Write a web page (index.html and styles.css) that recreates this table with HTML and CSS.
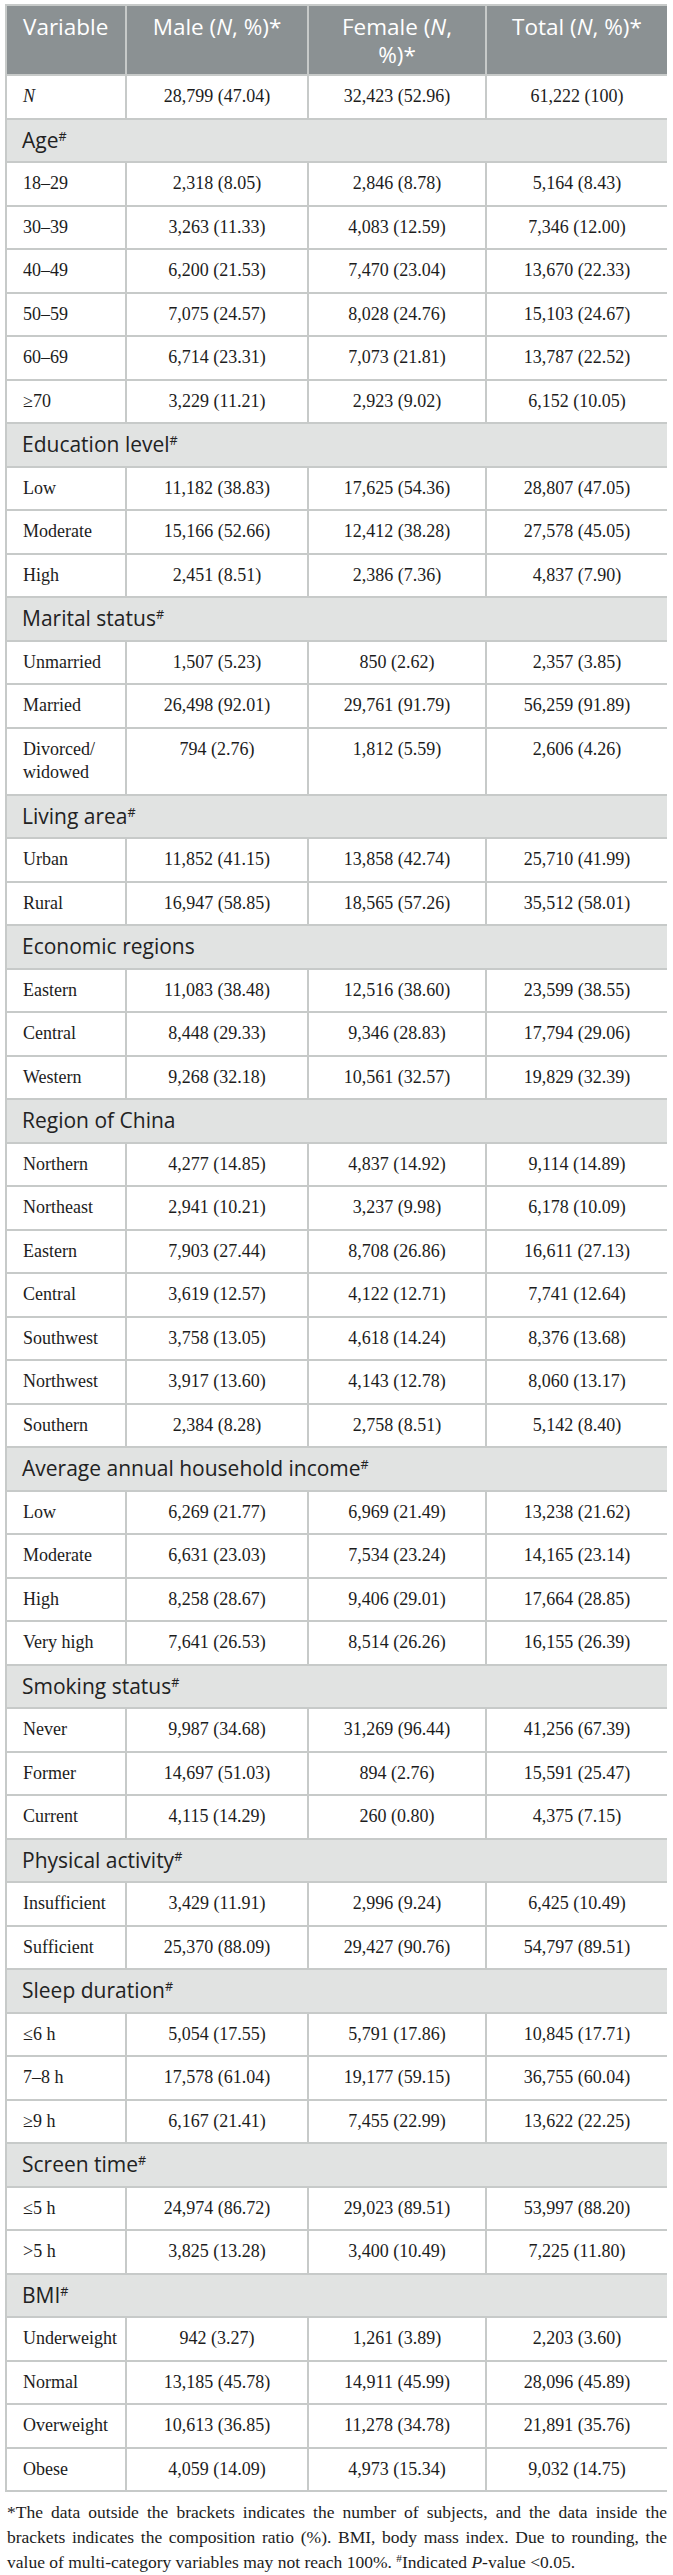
FILE: index.html
```html
<!DOCTYPE html>
<html>
<head>
<meta charset="utf-8">
<title>Characteristics of participants</title>
<link rel="stylesheet" href="styles.css">
</head>
<body>

<table class="tbl">
  <colgroup>
    <col class="c1"><col class="c2"><col class="c3"><col class="c4">
  </colgroup>
  <thead>
    <tr>
      <th class="first">Variable</th>
      <th>Male (<i>N</i>, %)*</th>
      <th>Female (<i>N</i>, %)*</th>
      <th>Total (<i>N</i>, %)*</th>
    </tr>
  </thead>
  <tbody>
    <tr><td class="v"><i>N</i></td><td>28,799 (47.04)</td><td>32,423 (52.96)</td><td>61,222 (100)</td></tr>

    <tr class="sec"><td colspan="4">Age<sup>#</sup></td></tr>
    <tr><td class="v">18–29</td><td>2,318 (8.05)</td><td>2,846 (8.78)</td><td>5,164 (8.43)</td></tr>
    <tr><td class="v">30–39</td><td>3,263 (11.33)</td><td>4,083 (12.59)</td><td>7,346 (12.00)</td></tr>
    <tr><td class="v">40–49</td><td>6,200 (21.53)</td><td>7,470 (23.04)</td><td>13,670 (22.33)</td></tr>
    <tr><td class="v">50–59</td><td>7,075 (24.57)</td><td>8,028 (24.76)</td><td>15,103 (24.67)</td></tr>
    <tr><td class="v">60–69</td><td>6,714 (23.31)</td><td>7,073 (21.81)</td><td>13,787 (22.52)</td></tr>
    <tr><td class="v">≥70</td><td>3,229 (11.21)</td><td>2,923 (9.02)</td><td>6,152 (10.05)</td></tr>

    <tr class="sec"><td colspan="4">Education level<sup>#</sup></td></tr>
    <tr><td class="v">Low</td><td>11,182 (38.83)</td><td>17,625 (54.36)</td><td>28,807 (47.05)</td></tr>
    <tr><td class="v">Moderate</td><td>15,166 (52.66)</td><td>12,412 (38.28)</td><td>27,578 (45.05)</td></tr>
    <tr><td class="v">High</td><td>2,451 (8.51)</td><td>2,386 (7.36)</td><td>4,837 (7.90)</td></tr>

    <tr class="sec"><td colspan="4">Marital status<sup>#</sup></td></tr>
    <tr><td class="v">Unmarried</td><td>1,507 (5.23)</td><td>850 (2.62)</td><td>2,357 (3.85)</td></tr>
    <tr><td class="v">Married</td><td>26,498 (92.01)</td><td>29,761 (91.79)</td><td>56,259 (91.89)</td></tr>
    <tr class="top"><td class="v">Divorced/<br>widowed</td><td>794 (2.76)</td><td>1,812 (5.59)</td><td>2,606 (4.26)</td></tr>

    <tr class="sec"><td colspan="4">Living area<sup>#</sup></td></tr>
    <tr><td class="v">Urban</td><td>11,852 (41.15)</td><td>13,858 (42.74)</td><td>25,710 (41.99)</td></tr>
    <tr><td class="v">Rural</td><td>16,947 (58.85)</td><td>18,565 (57.26)</td><td>35,512 (58.01)</td></tr>

    <tr class="sec"><td colspan="4">Economic regions</td></tr>
    <tr><td class="v">Eastern</td><td>11,083 (38.48)</td><td>12,516 (38.60)</td><td>23,599 (38.55)</td></tr>
    <tr><td class="v">Central</td><td>8,448 (29.33)</td><td>9,346 (28.83)</td><td>17,794 (29.06)</td></tr>
    <tr><td class="v">Western</td><td>9,268 (32.18)</td><td>10,561 (32.57)</td><td>19,829 (32.39)</td></tr>

    <tr class="sec"><td colspan="4">Region of China</td></tr>
    <tr><td class="v">Northern</td><td>4,277 (14.85)</td><td>4,837 (14.92)</td><td>9,114 (14.89)</td></tr>
    <tr><td class="v">Northeast</td><td>2,941 (10.21)</td><td>3,237 (9.98)</td><td>6,178 (10.09)</td></tr>
    <tr><td class="v">Eastern</td><td>7,903 (27.44)</td><td>8,708 (26.86)</td><td>16,611 (27.13)</td></tr>
    <tr><td class="v">Central</td><td>3,619 (12.57)</td><td>4,122 (12.71)</td><td>7,741 (12.64)</td></tr>
    <tr><td class="v">Southwest</td><td>3,758 (13.05)</td><td>4,618 (14.24)</td><td>8,376 (13.68)</td></tr>
    <tr><td class="v">Northwest</td><td>3,917 (13.60)</td><td>4,143 (12.78)</td><td>8,060 (13.17)</td></tr>
    <tr><td class="v">Southern</td><td>2,384 (8.28)</td><td>2,758 (8.51)</td><td>5,142 (8.40)</td></tr>

    <tr class="sec"><td colspan="4">Average annual household income<sup>#</sup></td></tr>
    <tr><td class="v">Low</td><td>6,269 (21.77)</td><td>6,969 (21.49)</td><td>13,238 (21.62)</td></tr>
    <tr><td class="v">Moderate</td><td>6,631 (23.03)</td><td>7,534 (23.24)</td><td>14,165 (23.14)</td></tr>
    <tr><td class="v">High</td><td>8,258 (28.67)</td><td>9,406 (29.01)</td><td>17,664 (28.85)</td></tr>
    <tr><td class="v">Very high</td><td>7,641 (26.53)</td><td>8,514 (26.26)</td><td>16,155 (26.39)</td></tr>

    <tr class="sec"><td colspan="4">Smoking status<sup>#</sup></td></tr>
    <tr><td class="v">Never</td><td>9,987 (34.68)</td><td>31,269 (96.44)</td><td>41,256 (67.39)</td></tr>
    <tr><td class="v">Former</td><td>14,697 (51.03)</td><td>894 (2.76)</td><td>15,591 (25.47)</td></tr>
    <tr><td class="v">Current</td><td>4,115 (14.29)</td><td>260 (0.80)</td><td>4,375 (7.15)</td></tr>

    <tr class="sec"><td colspan="4">Physical activity<sup>#</sup></td></tr>
    <tr><td class="v">Insufficient</td><td>3,429 (11.91)</td><td>2,996 (9.24)</td><td>6,425 (10.49)</td></tr>
    <tr><td class="v">Sufficient</td><td>25,370 (88.09)</td><td>29,427 (90.76)</td><td>54,797 (89.51)</td></tr>

    <tr class="sec"><td colspan="4">Sleep duration<sup>#</sup></td></tr>
    <tr><td class="v">≤6 h</td><td>5,054 (17.55)</td><td>5,791 (17.86)</td><td>10,845 (17.71)</td></tr>
    <tr><td class="v">7–8 h</td><td>17,578 (61.04)</td><td>19,177 (59.15)</td><td>36,755 (60.04)</td></tr>
    <tr><td class="v">≥9 h</td><td>6,167 (21.41)</td><td>7,455 (22.99)</td><td>13,622 (22.25)</td></tr>

    <tr class="sec"><td colspan="4">Screen time<sup>#</sup></td></tr>
    <tr><td class="v">≤5 h</td><td>24,974 (86.72)</td><td>29,023 (89.51)</td><td>53,997 (88.20)</td></tr>
    <tr><td class="v">&gt;5 h</td><td>3,825 (13.28)</td><td>3,400 (10.49)</td><td>7,225 (11.80)</td></tr>

    <tr class="sec"><td colspan="4">BMI<sup>#</sup></td></tr>
    <tr><td class="v">Underweight</td><td>942 (3.27)</td><td>1,261 (3.89)</td><td>2,203 (3.60)</td></tr>
    <tr><td class="v">Normal</td><td>13,185 (45.78)</td><td>14,911 (45.99)</td><td>28,096 (45.89)</td></tr>
    <tr><td class="v">Overweight</td><td>10,613 (36.85)</td><td>11,278 (34.78)</td><td>21,891 (35.76)</td></tr>
    <tr><td class="v">Obese</td><td>4,059 (14.09)</td><td>4,973 (15.34)</td><td>9,032 (14.75)</td></tr>
  </tbody>
</table>

<p class="note">*The data outside the brackets indicates the number of subjects, and the data inside the brackets indicates the composition ratio (%). BMI, body mass index. Due to rounding, the value of multi-category variables may not reach 100%. <sup>#</sup>Indicated <i>P</i>-value &lt;0.05.</p>

</body>
</html>
```

FILE: styles.css
```css
body {
    margin: 4px 6px 0 5px;
    background-color: #ffffff;
    font-family: "Liberation Serif", "Times New Roman", serif;
    color: #1c1c1c;
}

.tbl {
    width: 662px;
    border-collapse: collapse;
    table-layout: fixed;
}

.c1 { width: 120px; }
.c2 { width: 182px; }
.c3 { width: 178px; }
.c4 { width: 182px; }

.tbl th,
.tbl td {
    border: 2px solid #c7cac9;
}

.tbl th {
    background-color: #8b9193;
    color: #ffffff;
    font-family: "Open Sans", sans-serif;
    font-weight: 400;
    font-size: 22.5px;
    line-height: 28px;
    padding: 7px 12px 5px;
    text-align: center;
    vertical-align: top;
}

.tbl th.first {
    text-align: left;
    padding-left: 16px;
}

.tbl td {
    font-size: 18px;
    line-height: 23.5px;
    padding: 9px 16px;
    text-align: center;
    vertical-align: middle;
}

.tbl td.v {
    text-align: left;
    white-space: nowrap;
    padding-right: 2px;
}

.tbl tr.top td {
    vertical-align: top;
}

/* section rows */
.tbl tr.sec td {
    background-color: #e1e3e2;
    color: #222222;
    font-family: "Open Sans", sans-serif;
    font-size: 21px;
    text-align: left;
    padding-left: 15px;
}

sup {
    font-size: 0.6em;
    line-height: 0;
    vertical-align: 0.55em;
}

.note {
    margin: 8px 0 0 2px;
    font-size: 17.5px;
    line-height: 25px;
    text-align: justify;
}

.note sup {
    font-size: 0.65em;
}
```
